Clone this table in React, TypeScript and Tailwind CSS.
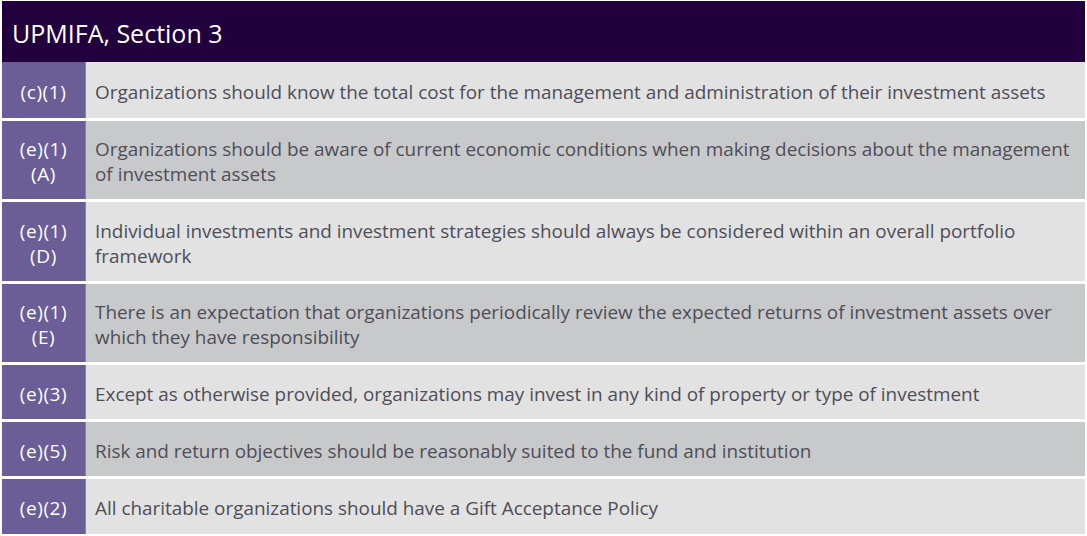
import React from "react";

const ROWS = [
  { code: ["(c)(1)"], text: "Organizations should know the total cost for the management and administration of their investment assets", bg: "bg-[#e2e2e2]", h: "h-[56px]" },
  { code: ["(e)(1)", "(A)"], text: "Organizations should be aware of current economic conditions when making decisions about the management of investment assets", bg: "bg-[#c8c9cb]", h: "h-[78px]" },
  { code: ["(e)(1)", "(D)"], text: "Individual investments and investment strategies should always be considered within an overall portfolio framework", bg: "bg-[#e2e2e2]", h: "h-[79px]" },
  { code: ["(e)(1)", "(E)"], text: "There is an expectation that organizations periodically review the expected returns of investment assets over which they have responsibility", bg: "bg-[#c8c9cb]", h: "h-[78px]" },
  { code: ["(e)(3)"], text: "Except as otherwise provided, organizations may invest in any kind of property or type of investment", bg: "bg-[#e2e2e2]", h: "h-[54px]" },
  { code: ["(e)(5)"], text: "Risk and return objectives should be reasonably suited to the fund and institution", bg: "bg-[#c8c9cb]", h: "h-[54px]" },
  { code: ["(e)(2)"], text: "All charitable organizations should have a Gift Acceptance Policy", bg: "bg-[#e2e2e2]", h: "h-[55px]" },
];

export default function App() {
  return (
    <div className="w-[1087px] h-[536px] bg-white pl-[2px] pr-[2px] pt-[1px] font-['Open_Sans',sans-serif]">
      <div className="h-[61px] bg-[#21003d] flex items-center pl-[10px] pt-[5px]">
        <span className="text-white text-[25px]">UPMIFA, Section 3</span>
      </div>
      <div className="flex flex-col gap-[3px]">
        {ROWS.map((row, i) => (
          <div key={i} className={`flex ${row.h}`}>
            <div className="w-[84px] shrink-0 bg-[#6b5e96] border-r border-[#8a80ad] flex flex-col items-center justify-center pt-[4px] text-white text-[19px] tracking-[0.6px] leading-[25px]">
              {row.code.map((c) => (
                <span key={c}>{c}</span>
              ))}
            </div>
            <div className={`flex-1 ${row.bg} flex items-center pl-[9px] pr-[4px] pt-[4px] text-[#4e4e58] text-[18.9px] leading-[25px]`}>
              {row.text}
            </div>
          </div>
        ))}
      </div>
    </div>
  );
}
